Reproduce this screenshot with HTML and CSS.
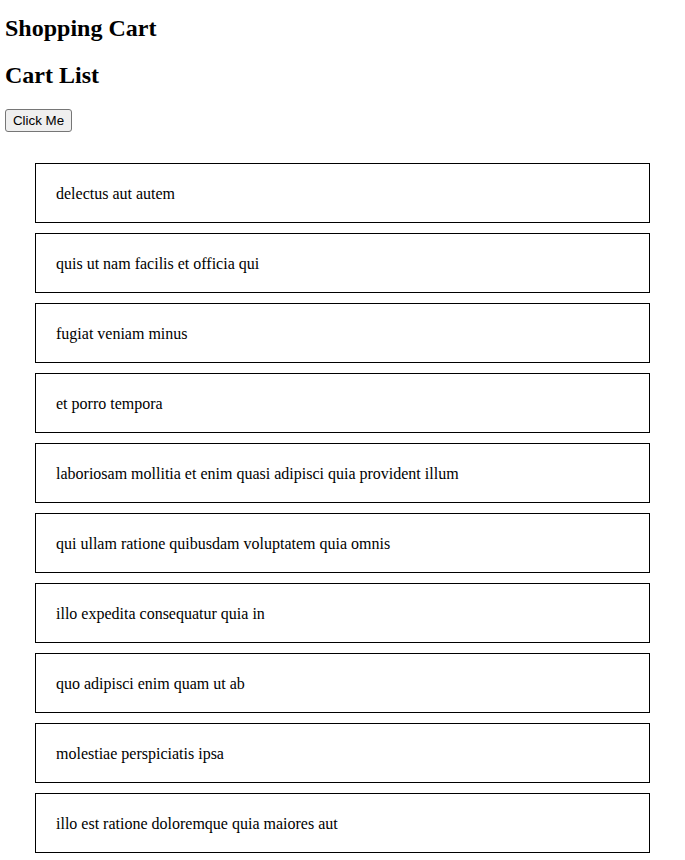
FILE: index.html
```html
<!DOCTYPE html>
<html>
<head>
<meta charset="utf-8">
<title>Shopping Cart</title>
<link rel="stylesheet" href="styles.css">
</head>
<body>
<div class="app">
  <h2 class="title first">Shopping Cart</h2>
  <h2 class="title second">Cart List</h2>
  <button class="btn" type="button">Click Me</button>
  <ul class="cart">
    <li class="cart-item">delectus aut autem</li>
    <li class="cart-item">quis ut nam facilis et officia qui</li>
    <li class="cart-item">fugiat veniam minus</li>
    <li class="cart-item">et porro tempora</li>
    <li class="cart-item">laboriosam mollitia et enim quasi adipisci quia provident illum</li>
    <li class="cart-item">qui ullam ratione quibusdam voluptatem quia omnis</li>
    <li class="cart-item">illo expedita consequatur quia in</li>
    <li class="cart-item">quo adipisci enim quam ut ab</li>
    <li class="cart-item">molestiae perspiciatis ipsa</li>
    <li class="cart-item">illo est ratione doloremque quia maiores aut</li>
  </ul>
</div>
</body>
</html>
```

FILE: styles.css
```css
html, body {
  margin: 0;
  padding: 0;
  background: #fff;
}

body {
  font-family: "Liberation Serif", "Times New Roman", serif;
  font-size: 16px;
  color: #000;
}

.app {
  padding: 15px 0 0 5px;
}

.title {
  font-size: 24px;
  font-weight: bold;
  line-height: 27.6px;
  margin: 0 0 19px 0;
}

.title.second {
  margin-bottom: 20px;
}

.btn {
  display: block;
  font-family: "Liberation Sans", Arial, sans-serif;
  font-size: 13.333px;
  color: #000;
  background: #efefef;
  border: 1px solid #767676;
  border-radius: 3px;
  padding: 0 6px;
  height: 23px;
  width: 67px;
  line-height: 21px;
  margin: 0;
}

.cart {
  list-style: none;
  margin: 31px 0 0 30px;
  padding: 0;
  width: 615px;
}

.cart-item {
  box-sizing: border-box;
  border: 1px solid #000;
  padding: 21px 20px 19px 20px;
  line-height: 18px;
  height: 60px;
  margin-bottom: 10px;
}
```
